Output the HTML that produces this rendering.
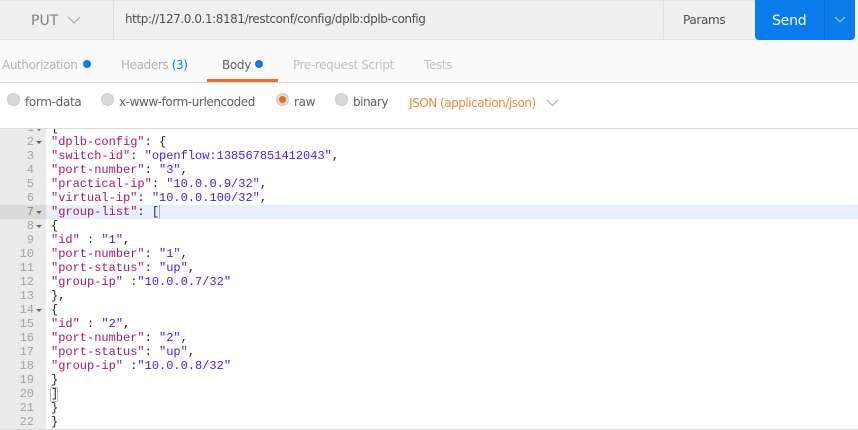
<!DOCTYPE html>
<html>
<head>
<meta charset="utf-8">
<style>
html,body{margin:0;padding:0}
body{width:858px;height:430px;position:relative;overflow:hidden;background:#fff;font-family:"DejaVu Sans","Liberation Sans",sans-serif}
.a{position:absolute;white-space:nowrap}
.t{font-size:12px;line-height:16px;letter-spacing:-.33px}
.dot{position:absolute;width:8px;height:8px;border-radius:50%;background:#097bed}
.rad{position:absolute;width:13px;height:13px;border-radius:50%;background:#d9d9d9;border:1px solid #ccc;box-sizing:border-box}
.ln{position:absolute;left:0;width:34px;text-align:right;color:#a3a3a3;font:12px/14px "Liberation Mono",monospace}
.cl{position:absolute;left:51px;white-space:pre;font:12px/14px "Liberation Mono",monospace;color:#222}
.k{color:#a11a6d}.s{color:#3a1ff0}
.fold{position:absolute;left:36px;width:0;height:0;border-left:3px solid transparent;border-right:3px solid transparent;border-top:3px solid #666}
</style>
</head>
<body>
<div class="a" style="left:0;top:0;width:858px;height:83px;background:#fafafa"></div>
<div class="a" style="left:-2px;top:0;width:317px;height:40px;width:766px;background:#f0f0f0;border:1px solid #e0e0e0;border-top-color:#e6e6e6;box-sizing:border-box;border-radius:0 3px 3px 0"></div>
<div class="a" style="left:113px;top:1px;width:1px;height:38px;background:#e0e0e0"></div>
<div class="a" style="left:663px;top:1px;width:1px;height:38px;background:#e0e0e0"></div>
<div class="a" style="left:31px;top:13px;font-size:14px;line-height:16px;color:#808080">PUT</div>
<svg class="a" style="left:66px;top:15px" width="16" height="10"><path d="M2 2l6 6 6-6" fill="none" stroke="#b3b3b3" stroke-width="1.3"/></svg>
<div class="a t" style="left:125px;top:11px;color:#505050;letter-spacing:-.43px">http://127.0.0.1:8181/restconf/config/dplb:dplb-config</div>
<div class="a t" style="left:683px;top:12px;color:#505050">Params</div>
<div class="a" style="left:755px;top:0;width:100px;height:40px;background:#097bed;border-radius:0 0 4px 4px"></div>
<div class="a" style="left:824px;top:0;width:1px;height:40px;background:#0a69c8"></div>
<div class="a" style="left:772px;top:13px;font-size:14px;line-height:16px;letter-spacing:-.2px;color:#fff">Send</div>
<svg class="a" style="left:833px;top:15px" width="14" height="9"><path d="M2 2l5 5 5-5" fill="none" stroke="#a9bcd2" stroke-width="1.3"/></svg>

<div class="a t" style="left:2px;top:57px;color:#b3b3b3;letter-spacing:-.38px">Authorization</div>
<div class="dot" style="left:83px;top:60px"></div>
<div class="a t" style="left:121px;top:57px;color:#b3b3b3;letter-spacing:-.38px">Headers <span style="color:#097bed">(3)</span></div>
<div class="a t" style="left:222px;top:57px;color:#606060">Body</div>
<div class="dot" style="left:255px;top:60px"></div>
<div class="a" style="left:207px;top:79px;width:71px;height:3px;background:#f26b26"></div>
<div class="a t" style="left:293px;top:57px;color:#c0c0c0;letter-spacing:-.38px">Pre-request Script</div>
<div class="a t" style="left:424px;top:57px;color:#c0c0c0">Tests</div>
<div class="a" style="left:0;top:82px;width:858px;height:1px;background:#dcdcdc"></div>

<div class="rad" style="left:7px;top:93px"></div>
<div class="a t" style="left:25px;top:94px;color:#606060">form-data</div>
<div class="rad" style="left:101px;top:93px"></div>
<div class="a t" style="left:119px;top:94px;color:#606060;letter-spacing:-.43px">x-www-form-urlencoded</div>
<div class="rad" style="left:276px;top:93px"></div>
<div class="a" style="left:279px;top:96px;width:7px;height:7px;border-radius:50%;background:#f26b26"></div>
<div class="a t" style="left:294px;top:94px;color:#606060">raw</div>
<div class="rad" style="left:335px;top:93px"></div>
<div class="a t" style="left:353px;top:94px;color:#606060;letter-spacing:-.5px">binary</div>
<div class="a t" style="left:409px;top:95px;color:#f5873f;letter-spacing:-.47px">JSON (application/json)</div>
<svg class="a" style="left:545px;top:98px" width="16" height="10"><path d="M2 2l5.5 5.5 5.5-5.5" fill="none" stroke="#b3b3b3" stroke-width="1.3"/></svg>
<div class="a" style="left:0;top:128px;width:858px;height:1px;background:#dcdcdc"></div>

<div class="a" style="left:0;top:129px;width:46px;height:301px;background:#ebebeb"></div>
<div class="a" style="left:46px;top:205px;width:812px;height:14px;background:#e6f0fc"></div>
<div class="a" style="left:0;top:205px;width:46px;height:14px;background:#d9d9d9"></div>
<div class="a" style="left:0;top:429px;width:858px;height:1px;background:#dcdcdc"></div>

<div style="position:absolute;left:0;top:129px;width:858px;height:7px;overflow:hidden">
<div class="ln" style="top:-8px">1</div><div class="cl" style="top:-8px">{</div>
<div class="fold" style="top:-1px"></div>
</div>
<div class="ln" style="top:135px">2</div>
<div class="ln" style="top:149px">3</div>
<div class="ln" style="top:163px">4</div>
<div class="ln" style="top:177px">5</div>
<div class="ln" style="top:191px">6</div>
<div class="ln" style="top:205px;color:#8a8a8a">7</div>
<div class="ln" style="top:219px">8</div>
<div class="ln" style="top:233px">9</div>
<div class="ln" style="top:247px">10</div>
<div class="ln" style="top:261px">11</div>
<div class="ln" style="top:275px">12</div>
<div class="ln" style="top:289px">13</div>
<div class="ln" style="top:303px">14</div>
<div class="ln" style="top:317px">15</div>
<div class="ln" style="top:331px">16</div>
<div class="ln" style="top:345px">17</div>
<div class="ln" style="top:359px">18</div>
<div class="ln" style="top:373px">19</div>
<div class="ln" style="top:387px">20</div>
<div class="ln" style="top:401px">21</div>
<div class="ln" style="top:415px">22</div>
<div class="fold" style="top:141px"></div>
<div class="fold" style="top:211px"></div>
<div class="fold" style="top:225px"></div>
<div class="fold" style="top:309px"></div>

<div class="cl" style="top:135px"><span class="k">"dplb-config"</span>: {</div>
<div class="cl" style="top:149px"><span class="k">"switch-id"</span>: <span class="s">"openflow:138567851412043"</span>,</div>
<div class="cl" style="top:163px"><span class="k">"port-number"</span>: <span class="s">"3"</span>,</div>
<div class="cl" style="top:177px"><span class="k">"practical-ip"</span>: <span class="s">"10.0.0.9/32"</span>,</div>
<div class="cl" style="top:191px"><span class="k">"virtual-ip"</span>: <span class="s">"10.0.0.100/32"</span>,</div>
<div class="cl" style="top:205px"><span class="k">"group-list"</span>: [</div>
<div class="a" style="left:159px;top:205px;width:1px;height:14px;background:#aaa"></div>
<div class="cl" style="top:219px">{</div>
<div class="cl" style="top:233px"><span class="k">"id"</span> : <span class="s">"1"</span>,</div>
<div class="cl" style="top:247px"><span class="k">"port-number"</span>: <span class="s">"1"</span>,</div>
<div class="cl" style="top:261px"><span class="k">"port-status"</span>: <span class="s">"up"</span>,</div>
<div class="cl" style="top:275px"><span class="k">"group-ip"</span> :<span class="s">"10.0.0.7/32"</span></div>
<div class="cl" style="top:289px">},</div>
<div class="cl" style="top:303px">{</div>
<div class="cl" style="top:317px"><span class="k">"id"</span> : <span class="s">"2"</span>,</div>
<div class="cl" style="top:331px"><span class="k">"port-number"</span>: <span class="s">"2"</span>,</div>
<div class="cl" style="top:345px"><span class="k">"port-status"</span>: <span class="s">"up"</span>,</div>
<div class="cl" style="top:359px"><span class="k">"group-ip"</span> :<span class="s">"10.0.0.8/32"</span></div>
<div class="cl" style="top:373px">}</div>
<div class="cl" style="top:387px">]</div>
<div class="a" style="left:50px;top:387px;width:6px;height:13px;border:1px solid #bbb;border-radius:2px"></div>
<div class="cl" style="top:401px">}</div>
<div class="cl" style="top:415px">}</div>
</body>
</html>
